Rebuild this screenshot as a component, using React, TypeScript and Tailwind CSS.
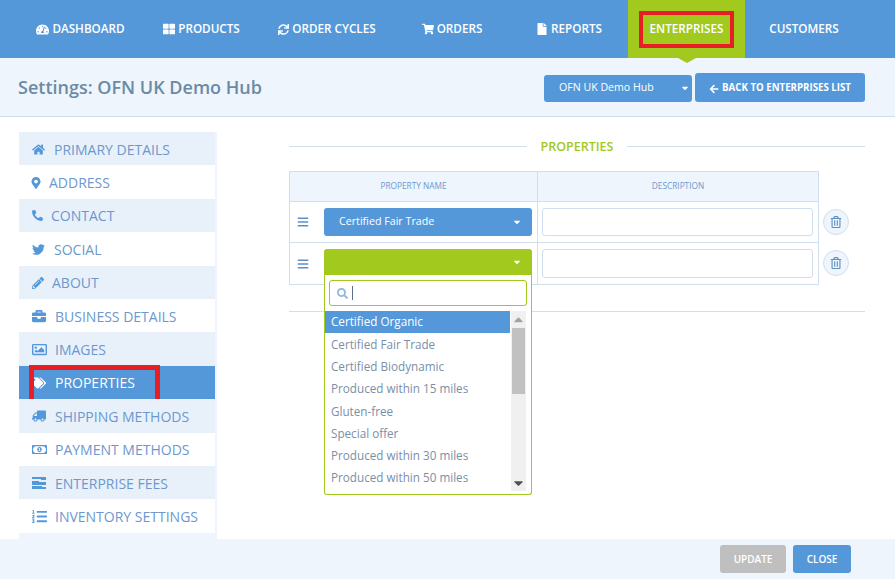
import React from "react";
import {
  FaTachometerAlt, FaThLarge, FaSync, FaShoppingCart, FaFile, FaArrowLeft, FaHome, FaMapMarkerAlt, FaPhone, FaTwitter,
  FaPencilAlt, FaBriefcase, FaRegImage, FaTags, FaTruck, FaRegMoneyBillAlt, FaListOl, FaBars, FaCaretDown, FaCaretUp,
  FaSearch, FaRegTrashAlt,
} from "react-icons/fa";

function FeesIcon() {
  return (
    <svg width="14" height="12" viewBox="0 0 14 12" fill="currentColor" className="block">
      <path d="M0 0h14v3H9v-1H0z" />
      <path d="M0 4h7v1h7v3H0z" />
      <path d="M0 9h10v1h4v2H0z" />
    </svg>
  );
}

const navItems: { label: string; w: string; icon?: React.ReactNode }[] = [
  { label: "DASHBOARD", w: "w-[125px]", icon: <FaTachometerAlt className="text-[13px]" /> },
  { label: "PRODUCTS", w: "w-[117px]", icon: <FaThLarge className="text-[12px]" /> },
  { label: "ORDER CYCLES", w: "w-[134px]", icon: <FaSync className="text-[11px]" /> },
  { label: "ORDERS", w: "w-[116px]", icon: <FaShoppingCart className="text-[12px]" /> },
  { label: "REPORTS", w: "w-[118px]", icon: <FaFile className="text-[12px]" /> },
];

const side: { label: string; icon: React.ReactNode; gap: string }[] = [
  { label: "PRIMARY DETAILS", icon: <FaHome className="text-[13px]" />, gap: "gap-[9px]" },
  { label: "ADDRESS", icon: <FaMapMarkerAlt className="text-[12px] -ml-[2px]" />, gap: "gap-[7px]" },
  { label: "CONTACT", icon: <FaPhone className="text-[11px] -scale-x-100" />, gap: "gap-[8px]" },
  { label: "SOCIAL", icon: <FaTwitter className="text-[13px]" />, gap: "gap-[9px]" },
  { label: "ABOUT", icon: <FaPencilAlt className="text-[12px]" />, gap: "gap-[8px]" },
  { label: "BUSINESS DETAILS", icon: <FaBriefcase className="text-[14px]" />, gap: "gap-[9px]" },
  { label: "IMAGES", icon: <FaRegImage className="text-[15px]" />, gap: "gap-[8px]" },
  { label: "PROPERTIES", icon: <FaTags className="text-[14px]" />, gap: "gap-[9px]" },
  { label: "SHIPPING METHODS", icon: <FaTruck className="text-[14px] -scale-x-100" />, gap: "gap-[9px]" },
  { label: "PAYMENT METHODS", icon: <FaRegMoneyBillAlt className="text-[15px]" />, gap: "gap-[8px]" },
  { label: "ENTERPRISE FEES", icon: <FeesIcon />, gap: "gap-[9px]" },
  { label: "INVENTORY SETTINGS", icon: <FaListOl className="text-[15px]" />, gap: "gap-[8px]" },
];

const options = [
  "Certified Organic", "Certified Fair Trade", "Certified Biodynamic", "Produced within 15 miles",
  "Gluten-free", "Special offer", "Produced within 30 miles", "Produced within 50 miles",
];

function Row({ children, last }: { children: React.ReactNode; last?: boolean }) {
  return (
    <div className={`flex h-[41px] ${last ? "" : "border-b border-[#cfdfee]"}`}>
      <div className="w-[34px] flex items-center pl-[7px] text-[#5f8fc4] text-[12px]"><FaBars /></div>
      <div className="w-[214px] flex items-center pr-[5px] border-r border-[#cfdfee]">{children}</div>
      <div className="flex-1 flex items-center pl-[4px] pr-[5px]">
        <div className={`w-full bg-white border border-[#cfdfee] rounded-[3px] ${last ? "h-[29px] -mt-px" : "h-[28px]"}`} />
      </div>
    </div>
  );
}

function Trash() {
  return (
    <div className="w-[26px] h-[26px] rounded-full bg-[#eff5fc] border border-[#cfdfee] flex items-center justify-center text-[#5f8fc4] text-[12px]">
      <FaRegTrashAlt />
    </div>
  );
}

export default function App() {
  return (
    <div className="relative w-[895px] h-[579px] overflow-hidden bg-white flex flex-col text-[#5498da] font-['Open_Sans',sans-serif]">
      {/* Top nav */}
      <nav className="h-[58px] shrink-0 bg-[#5498da] flex pl-[18px] text-white font-semibold text-[11.7px]">
        {navItems.map((n) => (
          <div key={n.label} className={`${n.w} flex items-center justify-center gap-[3px]`}>
            {n.icon}
            <span>{n.label}</span>
          </div>
        ))}
        <div className="relative w-[117px] bg-[#a1c91e] flex items-center justify-center">
          <span className="border-[4px] border-[#e71f24] h-[37px] px-[7px] flex items-center">ENTERPRISES</span>
          <div className="absolute top-full left-1/2 -translate-x-1/2 w-0 h-0 border-x-[9px] border-x-transparent border-t-[5px] border-t-[#a1c91e]" />
        </div>
        <div className="w-[118px] flex items-center justify-center">CUSTOMERS</div>
      </nav>

      {/* Header */}
      <header className="h-[59px] shrink-0 bg-[#eff5fc] border-b border-[#cfdfee] flex items-center pl-[18px] pr-[30px]">
        <h1 className="text-[18px] font-semibold text-[#6b8aa6] leading-none flex-1">Settings: OFN UK Demo Hub</h1>
        <div className="flex items-center gap-[3px] pt-px">
          <div className="w-[148px] h-[27px] mt-[1px] bg-[#5498da] rounded-[3px] text-white text-[10.6px] flex items-center pl-[15px] pr-[1px] justify-between">
            <span>OFN UK Demo Hub</span>
            <FaCaretDown className="text-[10px] mr-[1px]" />
          </div>
          <div className="w-[170px] h-[29px] pt-[2px] bg-[#5498da] rounded-[3px] text-white text-[9.7px] font-bold flex items-center justify-center gap-[3px]">
            <FaArrowLeft className="text-[10px]" />
            <span>BACK TO ENTERPRISES LIST</span>
          </div>
        </div>
      </header>

      {/* Main */}
      <main className="flex-1 min-h-0 flex overflow-hidden">
        <aside className="w-[198px] ml-[19px] mt-[15px] shrink-0 bg-[#eff5fc] pr-[2px]">
          {side.map((s, i) => {
            const active = s.label === "PROPERTIES";
            return (
              <div
                key={s.label}
                className={`relative h-[33.4px] pt-px flex items-center pl-[13px] text-[14px] ${s.gap} ${
                  active ? "bg-[#5498da] text-white" : i % 2 === 0 ? "bg-[#e8f1fa] text-[#6c98cf]" : "bg-white text-[#6c98cf]"
                }`}
              >
                <span className={active ? "text-white" : "text-[#5498da]"}>{s.icon}</span>
                <span>{s.label}</span>
                {active && <div className="absolute left-[10px] top-[-1px] w-[131px] h-[39px] border-[5px] border-[#e71f24]" />}
              </div>
            );
          })}
        </aside>

        <section className="ml-[72px] w-[576px] pt-[20px]">
          <div className="flex items-center gap-[14px]">
            <div className="flex-1 h-px bg-[#cfdfee]" />
            <span className="text-[12.5px] font-semibold text-[#a1c91e] leading-[18px] translate-y-px">PROPERTIES</span>
            <div className="flex-1 h-px bg-[#cfdfee]" />
          </div>
          <div className="relative mt-[16px] flex">
            <div className="w-[530px] border border-[#cfdfee]">
              <div className="h-[30px] flex bg-[#eff5fc] border-b border-[#cfdfee] text-[8.3px] text-[#6c98cf] font-normal">
                <div className="w-[248px] flex items-center justify-center border-r border-[#cfdfee]">PROPERTY NAME</div>
                <div className="flex-1 flex items-center justify-center">DESCRIPTION</div>
              </div>
              <Row>
                <div className="w-full h-[28px] pb-px bg-[#5498da] rounded-[3px] text-white text-[10.7px] flex items-center justify-between pl-[15px] pr-[10px]">
                  <span>Certified Fair Trade</span>
                  <FaCaretDown className="text-[10px]" />
                </div>
              </Row>
              <Row last>
                <div className="w-full h-[27px] bg-[#a1c91e] rounded-t-[3px] text-white text-[11px] flex items-center justify-end pr-[10px] -mt-[3px]">
                  <FaCaretDown className="text-[10px]" />
                </div>
              </Row>
            </div>
            <div className="flex flex-col pl-[4px] pt-[38px] gap-[15px]">
              <Trash />
              <Trash />
            </div>

            {/* Open dropdown */}
            <div className="absolute left-[35px] top-[104px] w-[208px] h-[220px] bg-white border border-[#a1c91e] border-t-0 rounded-b-[3px]">
              <div className="px-[4px] pt-[5px]">
                <div className="h-[26px] border border-[#a1c91e] rounded-[3px] flex items-center pl-[7px] gap-[4px] text-[#8eb4e0] text-[11px]">
                  <FaSearch />
                  <div className="w-px h-[14px] bg-[#5a7088]" />
                </div>
              </div>
              <div className="flex mt-[5px] h-[179px]">
                <ul className="w-[185px] text-[11.7px] text-[#7a8fa6]">
                  {options.map((o, i) => (
                    <li
                      key={o}
                      className={`h-[22.3px] flex items-center pl-[6px] ${i === 0 ? "bg-[#5498da] text-white" : ""}`}
                    >
                      {o}
                    </li>
                  ))}
                </ul>
                <div className="ml-[1px] w-[15px] h-[180px] bg-[#f0f0f0] flex flex-col items-center text-[#a3a3a3]">
                  <FaCaretUp className="h-[17px] text-[9px]" />
                  <div className="w-[13px] h-[66px] bg-[#c1c1c1]" />
                  <div className="flex-1" />
                  <FaCaretDown className="h-[16px] text-[9px] text-[#505050]" />
                </div>
              </div>
            </div>
          </div>
          <div className="mt-[26px] h-px bg-[#cfdfee]" />
        </section>
      </main>

      {/* Footer */}
      <footer className="h-[40px] shrink-0 bg-[#eff5fc] flex items-center justify-end gap-[7px] pr-[44px] text-[10px] font-semibold text-white">
        <div className="w-[66px] h-[28px] bg-[#bfbfbf] rounded-[3px] flex items-center justify-center">UPDATE</div>
        <div className="w-[58px] h-[28px] bg-[#5498da] rounded-[3px] flex items-center justify-center">CLOSE</div>
      </footer>
    </div>
  );
}
